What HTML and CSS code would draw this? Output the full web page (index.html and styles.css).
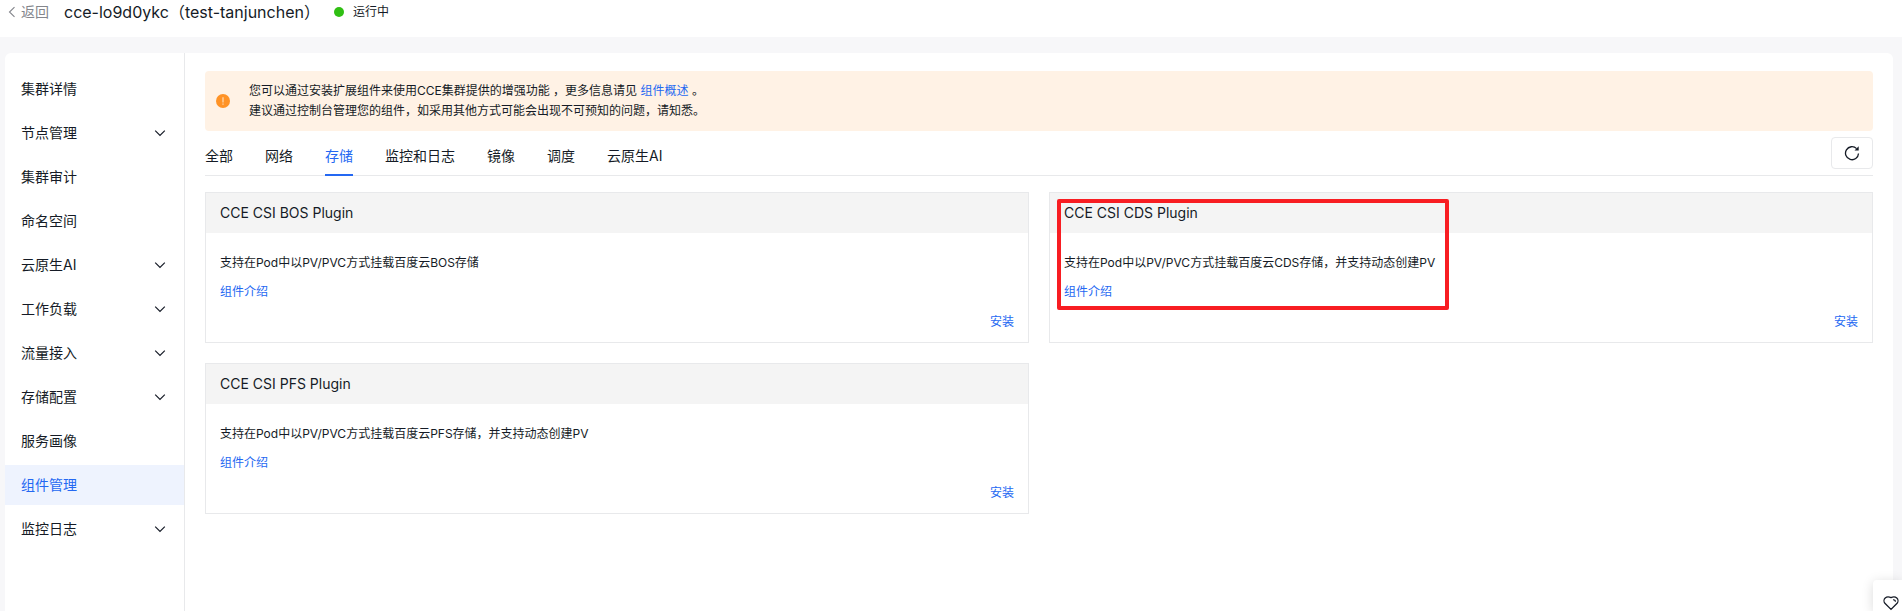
FILE: index.html
```html
<!DOCTYPE html>
<html lang="zh-CN">
<head>
<meta charset="utf-8">
<title>组件管理</title>
<link rel="stylesheet" href="styles.css">
</head>
<body>
<svg class="defs" aria-hidden="true">
  <symbol id="chevron" viewBox="0 0 12 12"><path d="M1.2 3.6 6 8.4l4.800-4.800" fill="none" stroke="currentColor" stroke-width="1.2"/></symbol>
</svg>
<header class="topbar">
  <a class="back" href="#"><svg class="back-icon" viewBox="0 0 8 12"><path d="M6.500 1.200 1.500 6l5 4.800" fill="none" stroke="currentColor" stroke-width="1.1"/></svg>返回</a>
  <h1 class="title">cce-lo9d0ykc（test-tanjunchen）</h1>
  <span class="status">运行中</span>
</header>
<div class="panel">
  <nav class="sidebar">
    <a class="item" href="#">集群详情</a>
    <a class="item" href="#">节点管理<svg class="chevron"><use href="#chevron"/></svg></a>
    <a class="item" href="#">集群审计</a>
    <a class="item" href="#">命名空间</a>
    <a class="item" href="#">云原生AI<svg class="chevron"><use href="#chevron"/></svg></a>
    <a class="item" href="#">工作负载<svg class="chevron"><use href="#chevron"/></svg></a>
    <a class="item" href="#">流量接入<svg class="chevron"><use href="#chevron"/></svg></a>
    <a class="item" href="#">存储配置<svg class="chevron"><use href="#chevron"/></svg></a>
    <a class="item" href="#">服务画像</a>
    <a class="item item-active" href="#" aria-current="page">组件管理</a>
    <a class="item" href="#">监控日志<svg class="chevron"><use href="#chevron"/></svg></a>
  </nav>
  <main class="content">
    <div class="alert">
      <svg class="alert-icon" viewBox="0 0 14 14"><circle cx="7" cy="7" r="7" fill="#ff9326"/><path d="M7 3.200v5.200M7 9.600v1.200" stroke="#ffe3c4" stroke-width="1.1"/></svg>
      <div class="alert-text">
        <p>您可以通过安装扩展组件来使用CCE集群提供的增强功能 ，更多信息请见 <a class="link" href="#">组件概述</a> 。</p>
        <p>建议通过控制台管理您的组件，如采用其他方式可能会出现不可预知的问题，请知悉。</p>
      </div>
    </div>
    <div class="toolbar">
      <div class="tabs" role="tablist">
        <button class="tab" role="tab">全部</button>
        <button class="tab" role="tab">网络</button>
        <button class="tab tab-active" role="tab" aria-selected="true">存储</button>
        <button class="tab" role="tab">监控和日志</button>
        <button class="tab" role="tab">镜像</button>
        <button class="tab" role="tab">调度</button>
        <button class="tab" role="tab">云原生AI</button>
      </div>
      <button class="refresh" aria-label="刷新"><svg class="refresh-icon" viewBox="0 0 16 16"><path d="M14.500 8.500A6.500 6.500 0 1 1 12.600 3.600" fill="none" stroke="#151b26" stroke-width="1.300"/><path d="M14.700 1.300v4.200h-4.200z" fill="#151b26"/></svg></button>
    </div>
    <div class="cards">
      <section class="card">
        <h2 class="card-title">CCE CSI BOS Plugin</h2>
        <div class="card-body">
          <p>支持在Pod中以PV/PVC方式挂载百度云BOS存储</p>
          <a class="link" href="#">组件介绍</a>
          <button class="install">安装</button>
        </div>
      </section>
      <section class="card">
        <h2 class="card-title">CCE CSI CDS Plugin</h2>
        <div class="card-body">
          <p>支持在Pod中以PV/PVC方式挂载百度云CDS存储，并支持动态创建PV</p>
          <a class="link" href="#">组件介绍</a>
          <button class="install">安装</button>
        </div>
        <div class="marker"></div>
      </section>
      <section class="card">
        <h2 class="card-title">CCE CSI PFS Plugin</h2>
        <div class="card-body">
          <p>支持在Pod中以PV/PVC方式挂载百度云PFS存储，并支持动态创建PV</p>
          <a class="link" href="#">组件介绍</a>
          <button class="install">安装</button>
        </div>
      </section>
    </div>
  </main>
</div>
<button class="feedback" aria-label="收藏"><svg class="heart" viewBox="0 0 16 16"><path d="M8 14.400 1.900 8.300C.6 6.700.8 4.200 2.200 2.900 3.900 1.500 6.200 1.700 8 2.600 9.800 1.700 12.100 1.500 13.800 2.900 15.200 4.200 15.400 6.700 14.100 8.300Z" fill="none" stroke="#151b26" stroke-width="1.300"/><path d="M10 4.800c1.600-.2 2.400.6 2.400 2" fill="none" stroke="#151b26" stroke-width="1.200"/></svg></button>
</body>
</html>
```
FILE: styles.css
```css
* { box-sizing: border-box; }
body {
  margin: 0;
  min-height: 100vh;
  display: flex;
  flex-direction: column;
  background: #f7f7f9;
  color: #151b26;
  font: 12px/20px Inter, "Noto Sans CJK SC", sans-serif;
}
h1, h2, p { margin: 0; font-weight: 400; }
a { color: inherit; text-decoration: none; }
button { font: inherit; color: inherit; border: 0; padding: 0; background: none; cursor: pointer; }
.defs { display: none; }
.link, .install { color: #2468f2; }

.topbar {
  display: flex;
  align-items: center;
  height: 37px;
  padding: 0 8px 13px;
  background: #fff;
}
.back { display: flex; align-items: center; gap: 5px; color: #84868c; font-size: 14px; }
.back-icon { width: 8px; height: 12px; }
.title { margin-left: 15px; font-size: 16px; }
.status { display: flex; align-items: center; gap: 9px; margin-left: 14px; }
.status::before { content: ""; width: 10px; height: 10px; border-radius: 50%; background: #30bf13; }

.panel {
  flex: 1;
  display: flex;
  margin: 16px 9px 0 5px;
  background: #fff;
  border-radius: 6px 6px 0 0;
}
.sidebar {
  flex: none;
  display: flex;
  flex-direction: column;
  gap: 4px;
  width: 180px;
  padding-top: 16px;
  border-right: 1px solid #e8e9eb;
}
.item {
  display: flex;
  align-items: center;
  justify-content: space-between;
  height: 40px;
  padding: 0 18px 0 16px;
  font-size: 14px;
}
.item-active { background: #eef3fe; color: #2468f2; }
.chevron { width: 12px; height: 12px; }

.content { flex: 1; min-width: 0; padding: 18px 20px; }
.alert {
  display: flex;
  align-items: center;
  gap: 19px;
  padding: 10px 11px;
  background: #fff2e5;
  border-radius: 4px;
}
.alert-icon { width: 14px; height: 14px; }
.toolbar {
  display: flex;
  justify-content: space-between;
  align-items: flex-start;
  padding-top: 6px;
  border-bottom: 1px solid #e8e9eb;
}
.tabs { display: flex; gap: 32px; margin-bottom: -1px; }
.tab {
  height: 39px;
  border-bottom: 2px solid transparent;
  font-size: 14px;
}
.tab-active { border-color: #2468f2; color: #2468f2; }
.refresh {
  display: grid;
  place-items: center;
  width: 42px;
  height: 32px;
  border: 1px solid #e8e9eb;
  border-radius: 4px;
}
.refresh-icon { width: 16px; height: 16px; }

.cards {
  display: grid;
  grid-template-columns: 1fr 1fr;
  gap: 20px;
  margin-top: 16px;
}
.card { position: relative; border: 1px solid #e8e9eb; }
.card-title {
  padding: 0 14px;
  background: #f4f4f4;
  font-size: 14px;
  line-height: 40px;
}
.card-body {
  display: flex;
  flex-direction: column;
  align-items: flex-start;
  gap: 9px;
  padding: 20px 14px 10px;
}
.install { align-self: flex-end; margin-top: 1px; }
.marker {
  position: absolute;
  top: 6px;
  left: 7px;
  width: 392px;
  height: 111px;
  border: 4px solid #f81d22;
  border-radius: 2px;
}
.feedback {
  position: fixed;
  right: 0;
  bottom: 0;
  width: 29px;
  height: 31px;
  padding: 14px 3px 0 10px;
  background: #fff;
  border-radius: 4px 0 0 0;
  box-shadow: 0 2px 12px rgba(0, 0, 0, .15);
}
.heart { display: block; width: 16px; height: 16px; }
```
